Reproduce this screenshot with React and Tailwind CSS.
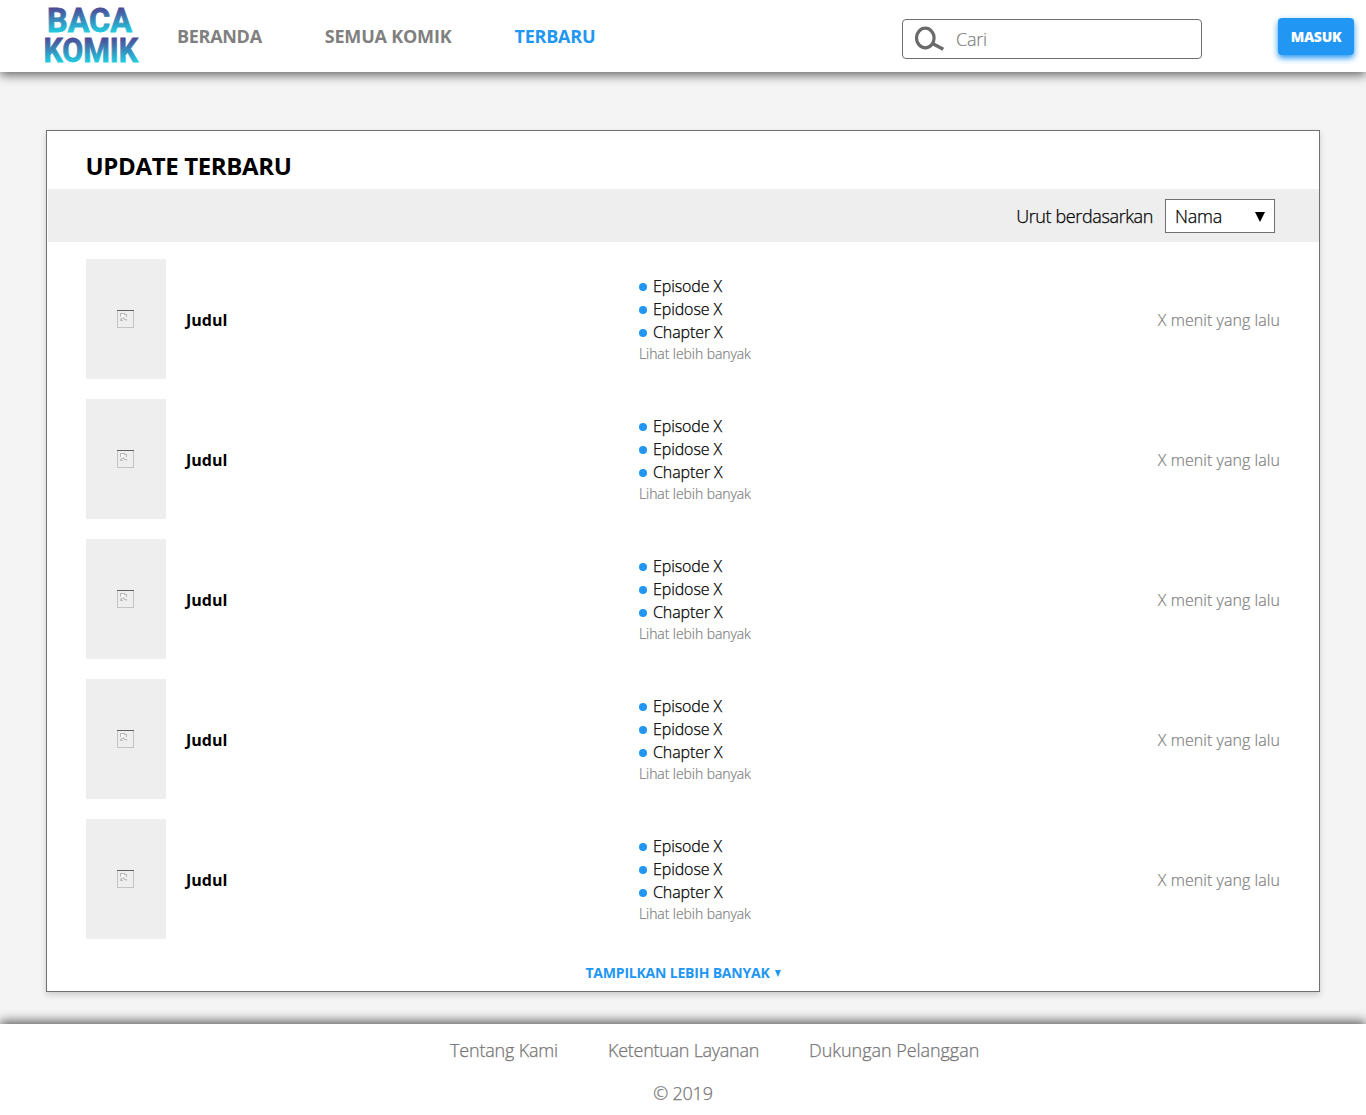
const comics = [1, 2, 3, 4, 5];
const episodes = ["Episode X", "Epidose X", "Chapter X"];

function Logo() {
  return (
    <svg width="100" height="72" viewBox="0 0 100 72" className="shrink-0 overflow-visible">
      <defs>
        <linearGradient id="top" gradientUnits="userSpaceOnUse" x1="0" y1="8" x2="0" y2="33">
          <stop offset="0" stopColor="#4c4a96" />
          <stop offset="1" stopColor="#1fd0e2" />
        </linearGradient>
        <linearGradient id="bottom" gradientUnits="userSpaceOnUse" x1="0" y1="38" x2="0" y2="63">
          <stop offset="0" stopColor="#4c4a96" />
          <stop offset="1" stopColor="#1fd0e2" />
        </linearGradient>
      </defs>
      <g fontFamily="Roboto, 'Open Sans', sans-serif" fontWeight="700" strokeWidth="0.8" fontSize="33">
        <text x="5" y="32" textLength="85" lengthAdjust="spacingAndGlyphs" fill="url(#top)" stroke="url(#top)">BACA</text>
        <text x="1.5" y="62" textLength="94.5" lengthAdjust="spacingAndGlyphs" fill="url(#bottom)" stroke="url(#bottom)">KOMIK</text>
      </g>
    </svg>
  );
}

function Header() {
  return (
    <header className="flex h-[72px] bg-white pl-[42px] pr-3 shadow-[0_3px_10px_rgba(0,0,0,0.6)]">
      <Logo />
      <nav className="ml-[35px] flex grow gap-[63px] pt-6 text-lg leading-6 font-bold text-[#808080]">
        <a className="tracking-[-0.3px]">BERANDA</a>
        <a className="tracking-[-0.2px]">SEMUA KOMIK</a>
        <a className="tracking-[-0.2px] text-[#2196f3]">TERBARU</a>
      </nav>
      <div className="mt-[19px] flex h-10 w-[300px] items-center rounded border border-[#707070] pl-3">
        <svg width="30" height="26" viewBox="0 0 30 26" fill="none" stroke="#6a6a6a">
          <ellipse cx="10.3" cy="12" rx="8.8" ry="9.8" strokeWidth="3.2" />
          <path d="M17.5 17.5 28.3 23.3" strokeWidth="3.4" />
        </svg>
        <span className="ml-[11px] text-lg font-light tracking-[-0.2px] text-[#808080] [-webkit-text-stroke:0.2px]">Cari</span>
      </div>
      <button className="mt-[18px] ml-[76px] h-[37px] w-[76px] rounded bg-[#2196f3] text-sm font-extrabold text-white shadow-[0_3px_6px_#2196f3]">
        <span className="tracking-[-0.3px]">MASUK</span>
      </button>
    </header>
  );
}

function BrokenImage() {
  return (
    <svg width="17" height="18" viewBox="0 0 17 18" shapeRendering="crispEdges" className="-mt-px -ml-px">
      <path d="M0 0h17v1H0z" fill="#606060" />
      <path d="M0 1h1v16h15V1h1v17H0z" fill="#c4c4c4" />
      <path d="M3 3h5v1h2v3H9V5H7V4H4v3H3z" fill="#b8b8b8" />
      <path d="M4 4h3v3H4z" fill="#fafafa" />
      <path d="M3 9h1V8h2V7h1v1h1v1h2v2H9v-1H7V9H5v1h1v1H3z" fill="#c0c0c0" />
    </svg>
  );
}

function ComicRow() {
  return (
    <article className="grid h-[120px] grid-cols-[100px_453px_1fr_auto] items-center">
      <div className="flex h-[120px] w-20 items-center justify-center bg-[#eee]">
        <BrokenImage />
      </div>
      <h2 className="pt-px text-base font-bold">Judul</h2>
      <div className="pt-0.5">
        {episodes.map((name) => (
          <div key={name} className="flex h-[23px] items-center gap-1.5 text-base leading-[23px]">
            <span className="size-2 rounded-full bg-[#2196f3]" />
            <span className="font-light tracking-[-0.1px] [-webkit-text-stroke:0.25px]">{name}</span>
          </div>
        ))}
        <div className="pb-px text-sm leading-5 font-light tracking-[-0.08px] text-[#808080] [-webkit-text-stroke:0.2px]">
          Lihat lebih banyak
        </div>
      </div>
      <div className="pt-px text-base font-light tracking-[0.06px] text-[#808080] [-webkit-text-stroke:0.2px]">
        X menit yang lalu
      </div>
    </article>
  );
}

function Footer() {
  return (
    <footer className="h-[91px] bg-white text-lg leading-6 font-light text-[#757575] shadow-[0_-3px_10px_rgba(0,0,0,0.6)] [-webkit-text-stroke:0.25px]">
      <nav className="flex gap-[50px] pt-3.5 pl-[450px]">
        <a className="tracking-[-0.18px]">Tentang Kami</a>
        <a className="tracking-[-0.27px]">Ketentuan Layanan</a>
        <a className="tracking-[-0.05px]">Dukungan Pelanggan</a>
      </nav>
      <p className="mt-[19px] text-center tracking-[-0.2px]">© 2019</p>
    </footer>
  );
}

export default function App() {
  return (
    <div className="flex h-[1115px] w-[1366px] flex-col overflow-hidden bg-[#f4f4f4] font-['Open_Sans','Noto_Sans',sans-serif] text-black">
      <Header />
      <main className="mx-[46px] mt-[58px] mb-8 h-[862px] border border-[#707070] bg-white shadow-[0_3px_6px_rgba(0,0,0,0.16)]">
        <h1 className="h-[58px] pt-[19px] pl-[38.5px] text-2xl leading-8 font-bold">
          <span className="tracking-[-0.35px]">UPDATE TERBARU</span>
        </h1>
        <div className="ml-px flex h-[53px] items-center justify-end bg-[#eee] pr-11 text-lg font-light">
          <span className="mr-3 tracking-[-0.38px] [-webkit-text-stroke:0.25px]">Urut berdasarkan</span>
          <div className="flex h-[34px] w-[110px] items-center justify-between border border-[#707070] bg-white pr-[9px] pl-[9px]">
            <span className="tracking-[-0.2px] [-webkit-text-stroke:0.25px]">Nama</span>
            <svg width="10" height="10" viewBox="0 0 10 10" className="mt-0.5">
              <path d="M0 0h10L5 10z" />
            </svg>
          </div>
        </div>
        <section className="flex flex-col gap-5 pt-[17px] pr-[39px] pl-[39px]">
          {comics.map((id) => (
            <ComicRow key={id} />
          ))}
        </section>
        <div className="mt-6 flex h-5 items-center justify-center gap-[5px] text-sm font-bold text-[#2196f3]">
          <span className="tracking-[-0.2px]">TAMPILKAN LEBIH BANYAK</span>
          <svg width="6" height="7" viewBox="0 0 6 7" fill="currentColor">
            <path d="M0 0h6L3 7z" />
          </svg>
        </div>
      </main>
      <Footer />
    </div>
  );
}
